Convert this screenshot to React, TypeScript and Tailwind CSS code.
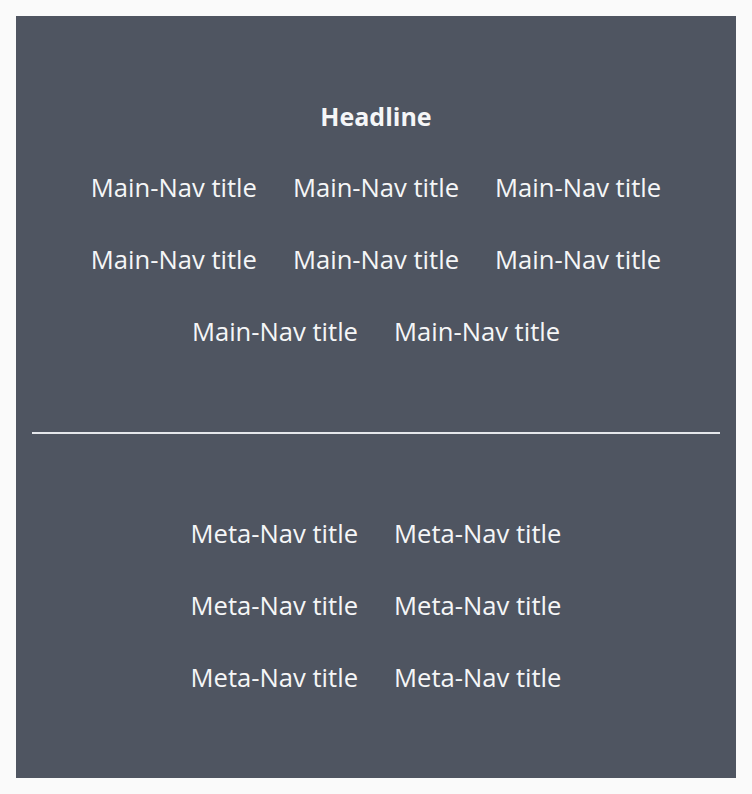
import React from 'react';

const mainNav = Array.from({ length: 8 }, () => 'Main-Nav title');
const metaNav = Array.from({ length: 6 }, () => 'Meta-Nav title');

function NavList({ items, width }: { items: string[]; width: string }) {
  return (
    <ul className={`mx-auto flex flex-wrap justify-center ${width}`}>
      {items.map((label, i) => (
        <li key={i} className="flex h-[72px] items-center px-[18px]">
          <a href="#" className="text-[25.6px] leading-none whitespace-nowrap text-[#f5f6f7]">
            {label}
          </a>
        </li>
      ))}
    </ul>
  );
}

export default function App() {
  return (
    <div className="min-h-screen bg-[#fafafa] p-4" style={{ fontFamily: '"Open Sans", "Liberation Sans", sans-serif' }}>
      <footer className="bg-[#4f5561] px-4">
        <section className="pt-20 pb-16">
          <h2 className="text-center text-[25px] font-bold leading-[40px] text-[#f5f6f7]">Headline</h2>
          <nav className="mt-4">
            <NavList items={mainNav} width="w-[640px]" />
          </nav>
        </section>
        <hr className="h-0.5 border-0 bg-[#e5e7eb]" />
        <section className="py-16">
          <NavList items={metaNav} width="w-[430px]" />
        </section>
      </footer>
    </div>
  );
}
